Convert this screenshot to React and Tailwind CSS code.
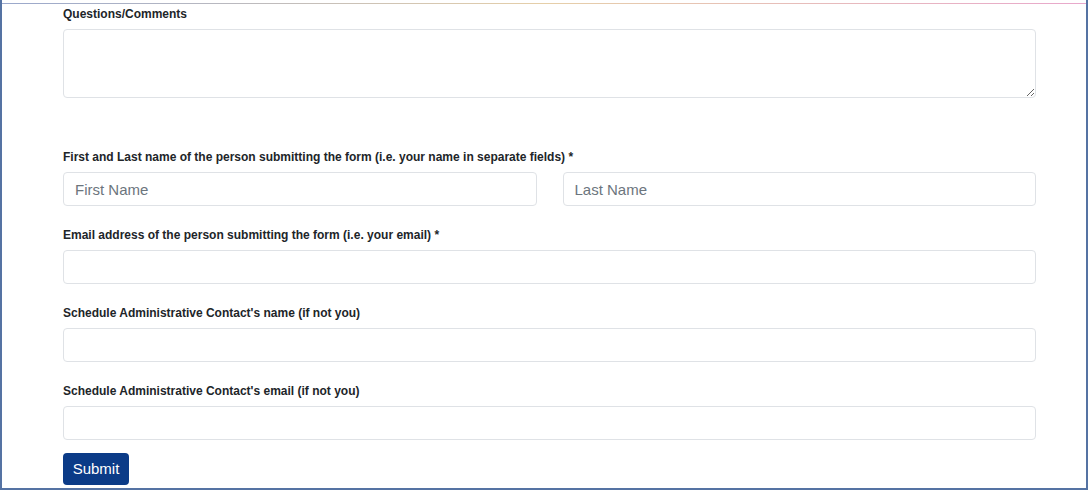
import React from 'react';

const Label = ({ children, className = '' }) => (
  <label className={`block text-[12px] leading-4 font-bold text-[#212529] ${className}`}>
    {children}
  </label>
);

const inputCls =
  'block w-full h-[34px] rounded-[4px] border border-[#dfe2e6] bg-white px-[11px] text-[15px] text-[#212529] placeholder:text-[#6c757d] outline-none';

export default function App() {
  return (
    <div
      className="w-[1088px] h-[490px] bg-white border-l-2 border-r-2 border-b-2 border-[#5573a3] flex flex-col overflow-hidden"
      style={{ fontFamily: '"Liberation Sans", Arial, sans-serif' }}
    >
      {/* top strip */}
      <div className="h-[3px] bg-white" />
      <div className="h-px bg-gradient-to-r from-[#9aa8cc] via-[#e6cfa8] to-[#e8a8cc]" />

      <form className="pl-[61px] pr-[50px] flex flex-col">
        <Label className="mt-[2px]">Questions/Comments</Label>
        <textarea className="mt-[7px] block w-full h-[69px] rounded-[4px] border border-[#dfe2e6] bg-white p-2 text-[15px] outline-none" />

        <Label className="mt-[51px]">
          First and Last name of the person submitting the form (i.e. your name in separate fields) *
        </Label>
        <div className="mt-[7px] grid grid-cols-2 gap-[26px]">
          <input className={inputCls} placeholder="First Name" />
          <input className={inputCls} placeholder="Last Name" />
        </div>

        <Label className="mt-[21px]">
          Email address of the person submitting the form (i.e. your email) *
        </Label>
        <input className={`mt-[7px] ${inputCls}`} />

        <Label className="mt-[21px]">Schedule Administrative Contact's name (if not you)</Label>
        <input className={`mt-[7px] ${inputCls}`} />

        <Label className="mt-[21px]">Schedule Administrative Contact's email (if not you)</Label>
        <input className={`mt-[7px] ${inputCls}`} />

        <div className="mt-[13px]">
          <button
            type="button"
            className="h-[32px] w-[66px] rounded-[4px] bg-[#0b3b87] text-white text-[15px]"
          >
            Submit
          </button>
        </div>
      </form>
    </div>
  );
}
